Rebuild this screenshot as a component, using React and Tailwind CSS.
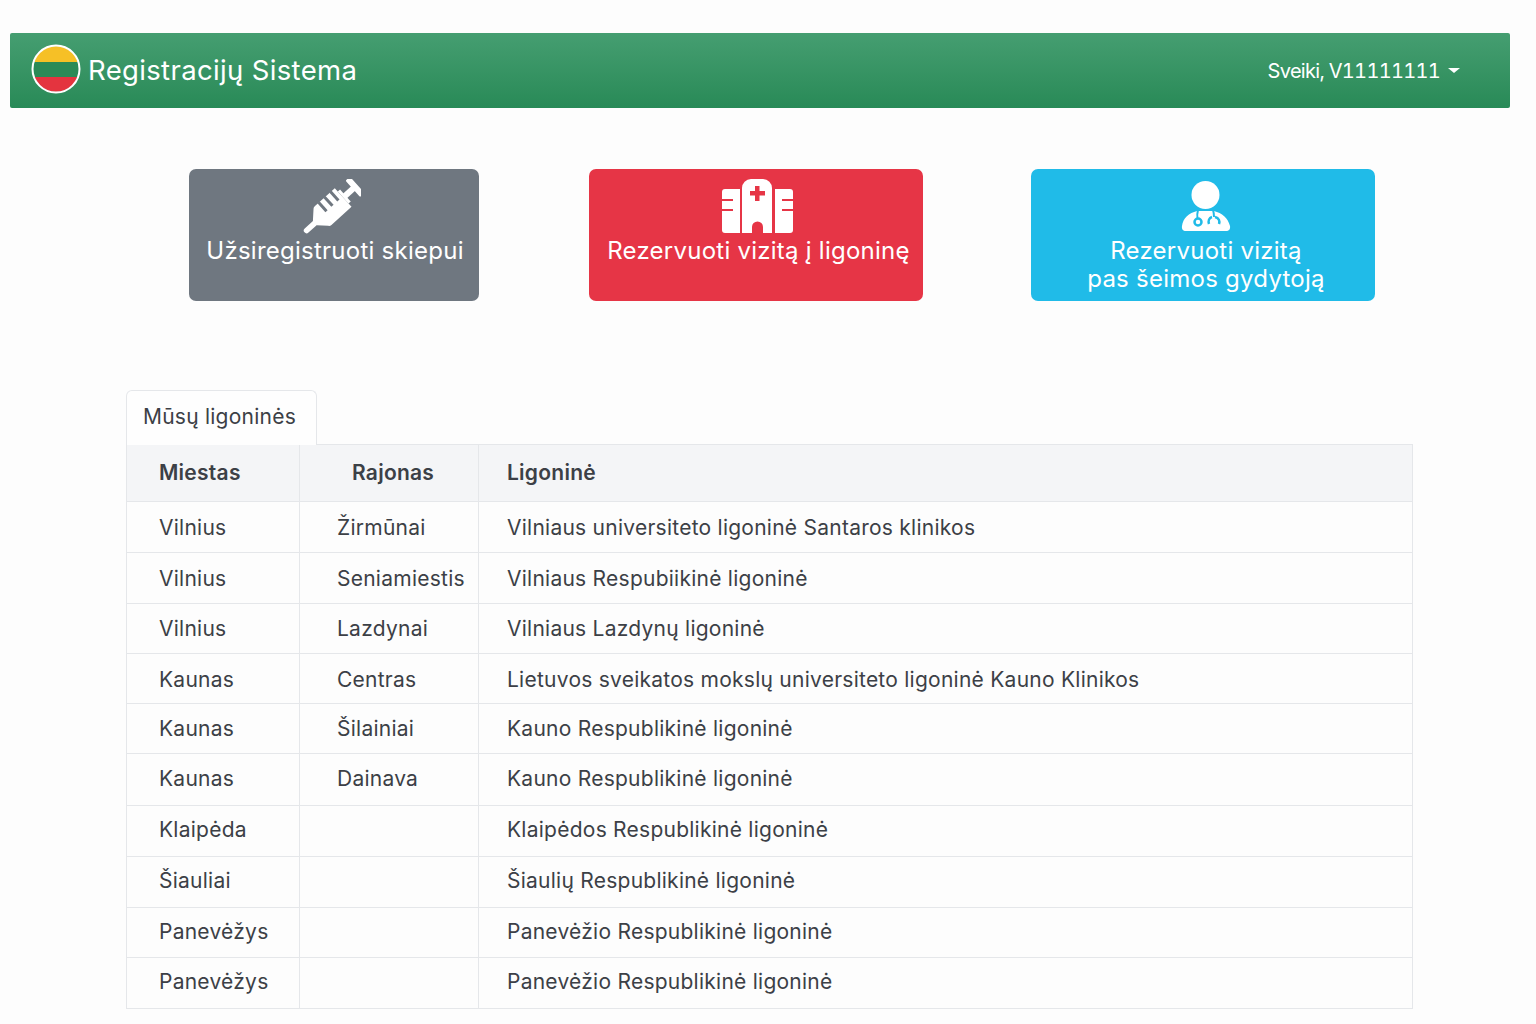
import React from "react";

const rows = [
  ["Vilnius", "Žirmūnai", "Vilniaus universiteto ligoninė Santaros klinikos", "h-[51px]", "pt-[2px]"],
  ["Vilnius", "Seniamiestis", "Vilniaus Respubiikinė ligoninė", "h-[51px]", "pt-[2px]"],
  ["Vilnius", "Lazdynai", "Vilniaus Lazdynų ligoninė", "h-[50px]", ""],
  ["Kaunas", "Centras", "Lietuvos sveikatos mokslų universiteto ligoninė Kauno Klinikos", "h-[50px]", "pt-[2px]"],
  ["Kaunas", "Šilainiai", "Kauno Respublikinė ligoninė", "h-[50px]", ""],
  ["Kaunas", "Dainava", "Kauno Respublikinė ligoninė", "h-[52px]", "pb-[2px]"],
  ["Klaipėda", "", "Klaipėdos Respublikinė ligoninė", "h-[51px]", "pb-[2px]"],
  ["Šiauliai", "", "Šiaulių Respublikinė ligoninė", "h-[51px]", "pb-[2px]"],
  ["Panevėžys", "", "Panevėžio Respublikinė ligoninė", "h-[50px]", "pb-[2px]"],
  ["Panevėžys", "", "Panevėžio Respublikinė ligoninė", "h-[51px]", "pb-[2px]"],
];

function Flag() {
  return (
    <svg width="50" height="50" viewBox="0 0 50 50" className="shrink-0 mb-[3px]">
      <defs>
        <clipPath id="flagclip"><circle cx="25" cy="25" r="23" /></clipPath>
      </defs>
      <g clipPath="url(#flagclip)">
        <rect x="0" y="0" width="50" height="18" fill="#f6c026" />
        <rect x="0" y="18" width="50" height="15" fill="#2b8a57" />
        <rect x="0" y="33" width="50" height="17" fill="#e4343f" />
      </g>
      <circle cx="25" cy="25" r="23.5" fill="none" stroke="#ffffff" strokeWidth="2" />
    </svg>
  );
}

function Syringe() {
  return (
    <svg width="58" height="56" viewBox="0 0 58 56" className="mr-[4px]">
      <g transform="translate(3 52) rotate(-42)" fill="#fff">
        <rect x="-2" y="-2.800" width="20" height="5.600" rx="2.800" />
        <path d="M12 -3 L20 -11 Q21 -12.500 23 -12.500 H50 V12.500 H23 Q21 12.500 20 11 L12 3 Z" />
        <rect x="50" y="-8" width="3" height="16" />
        <rect x="52" y="-3" width="16" height="6" />
        <rect x="63" y="-11" width="6" height="22" rx="1.500" />
        <g fill="#6f7780">
          <rect x="27" y="-13" width="3" height="12" />
          <rect x="35" y="-13" width="3" height="12" />
          <rect x="43" y="-13" width="3" height="12" />
        </g>
      </g>
    </svg>
  );
}

function Hospital() {
  return (
    <svg width="71" height="55" viewBox="0 0 71 55" className="ml-[3px]">
      <path fill="#fff" d="M3 10H18V54H3a3 3 0 0 1-3-3V13a3 3 0 0 1 3-3Z" />
      <path fill="#fff" d="M53 10H68a3 3 0 0 1 3 3V51a3 3 0 0 1-3 3H53Z" />
      <path fill="#fff" d="M20 54V9a9 9 0 0 1 9-9H41a9 9 0 0 1 9 9V54H41V48a5.500 5.500 0 0 0-11 0V54Z" />
      <path fill="#e63546" d="M33 7h4.500v5H43v4.500H37.500V22H33V16.500H28V12h5Z" />
      <path stroke="#e63546" strokeWidth="2" d="M0 21H11M0 31H11M60 21H71M60 31H71" />
    </svg>
  );
}

function Doctor() {
  return (
    <svg width="50" height="52" viewBox="0 0 50 52" className="ml-[5px]">
      <circle cx="24.500" cy="14" r="14" fill="#fff" />
      <path fill="#fff" d="M1 45C2 37 8 32 16 30H33C41 32 47 37 49 45C49.500 48 48 50 45 50H5C2 50 .5 48 1 45Z" />
      <path fill="none" stroke="#20bbe8" strokeWidth="2" d="M17 29C16 33 16 35 16.500 37M32 29C33 32 33 34 33 36" />
      <circle cx="17" cy="41" r="3.500" fill="none" stroke="#20bbe8" strokeWidth="2.500" />
      <path fill="none" stroke="#20bbe8" strokeWidth="2.500" d="M31 36C28 37 27 40 28 43M38 43C39 40 38 37 34 36" />
    </svg>
  );
}

function ActionButton({ className, textClass = "", icon, children }) {
  return (
    <div className={`h-[132px] rounded-[7px] flex flex-col items-center pt-[10px] text-white text-[24px] leading-[28px] tracking-[0.25px] text-center ${className}`}>
      <div className="h-[55px] flex items-center justify-center">{icon}</div>
      <div className={`mt-[3px] ${textClass}`}>{children}</div>
    </div>
  );
}

export default function App() {
  return (
    <div className="w-[1536px] h-[1024px] overflow-hidden bg-[#fdfdfd] pt-[33px] font-['Inter',sans-serif] text-[#3c4046] text-[21px] tracking-[0.25px]">
      <nav className="ml-[10px] w-[1500px] h-[75px] rounded-[2px] bg-gradient-to-b from-[#459e71] to-[#288a57] flex items-center justify-between pl-[21px] pr-[50px] text-white">
        <div className="flex items-center gap-[7px]">
          <Flag />
          <span className="text-[27.500px] tracking-[0.35px]">Registracijų Sistema</span>
        </div>
        <div className="flex items-center gap-[8px] text-[20px] tracking-[-0.7px] tabular-nums">
          <span>Sveiki, V11111111</span>
          <span className="w-0 h-0 border-x-[6px] border-x-transparent border-t-[5px] border-t-white" />
        </div>
      </nav>

      <div className="mt-[61px] pl-[189px] flex">
        <ActionButton className="w-[290px] bg-[#6f7780]" textClass="pl-[2px]" icon={<Syringe />}>
          Užsiregistruoti skiepui
        </ActionButton>
        <ActionButton className="w-[334px] ml-[110px] bg-[#e63546]" textClass="pl-[5px]" icon={<Hospital />}>
          Rezervuoti vizitą į ligoninę
        </ActionButton>
        <ActionButton className="w-[344px] ml-[108px] bg-[#20bbe8]" textClass="pl-[6px]" icon={<Doctor />}>
          Rezervuoti vizitą<br />pas šeimos gydytoją
        </ActionButton>
      </div>

      <div className="ml-[126px] mt-[89px] w-[191px] h-[55px] -mb-px relative z-10 bg-[#fefefe] border border-b-0 border-[#e5e7ea] rounded-t-[6px] flex items-center justify-center pr-[4px] pb-[2px]">
        Mūsų ligoninės
      </div>

      <table className="ml-[126px] w-[1287px] table-fixed border-collapse">
        <colgroup>
          <col className="w-[173px]" />
          <col className="w-[179px]" />
          <col />
        </colgroup>
        <thead>
          <tr className="h-[57px] bg-[#f4f5f7] text-left">
            <th className="font-semibold border border-[#e5e7ea] pl-[32px]">Miestas</th>
            <th className="font-semibold border border-[#e5e7ea] pl-[52px]">Rajonas</th>
            <th className="font-semibold border border-[#e5e7ea] pl-[28px]">Ligoninė</th>
          </tr>
        </thead>
        <tbody>
          {rows.map((r, i) => (
            <tr key={i} className={r[3]}>
              <td className={`border border-[#e5e7ea] pl-[32px] ${r[4]}`}>{r[0]}</td>
              <td className={`border border-[#e5e7ea] pl-[37px] ${r[4]}`}>{r[1]}</td>
              <td className={`border border-[#e5e7ea] pl-[28px] ${r[4]}`}>{r[2]}</td>
            </tr>
          ))}
        </tbody>
      </table>
    </div>
  );
}
